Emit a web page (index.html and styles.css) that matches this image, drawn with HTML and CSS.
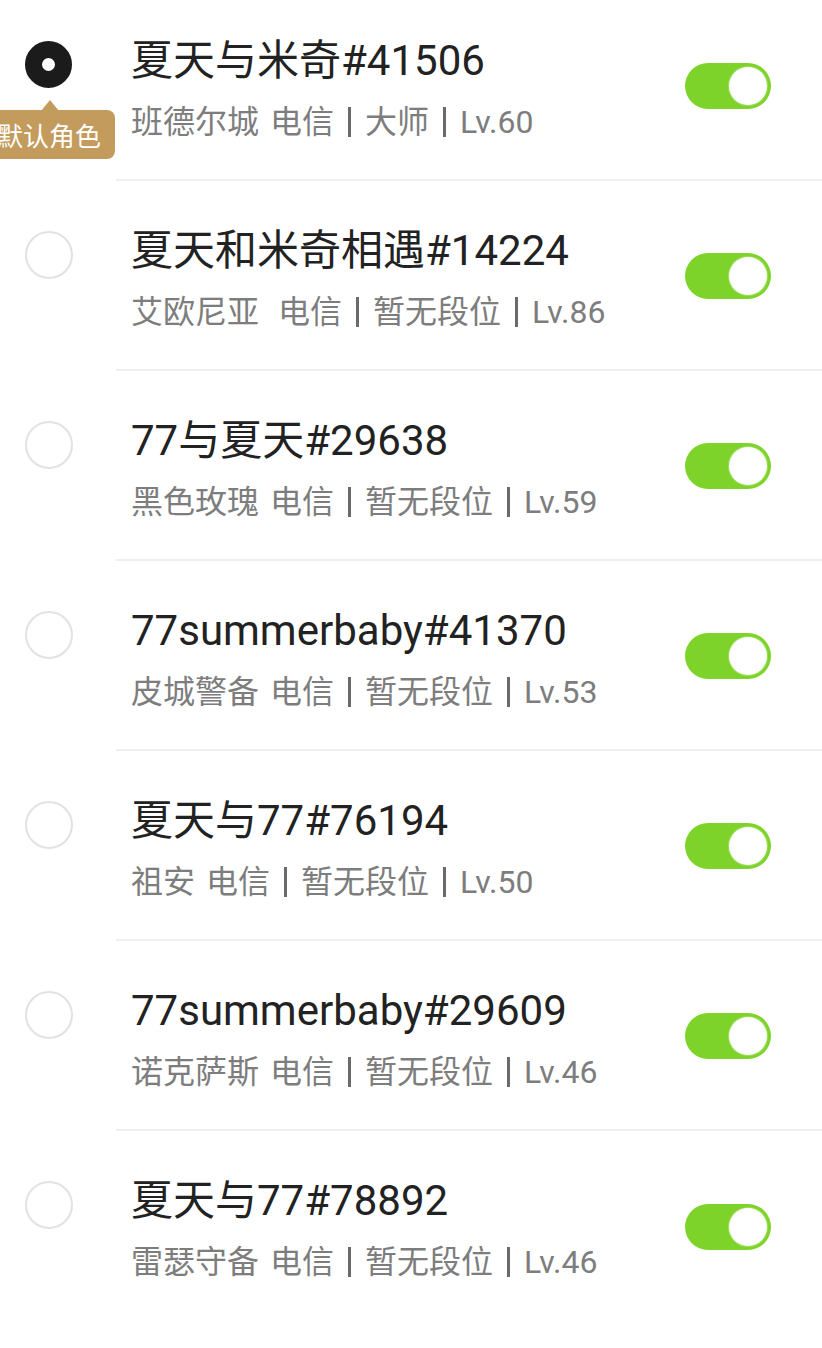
FILE: index.html
```html
<!DOCTYPE html>
<html lang="zh">
<head>
<meta charset="utf-8">
<title>角色列表</title>
<link rel="stylesheet" href="styles.css">
</head>
<body>
<div class="list">
  <div class="row first">
    <div class="pick">
      <span class="radio on"></span>
      <span class="badge">默认角色</span>
    </div>
    <div class="main">
      <div class="info">
        <div class="name">夏天与米奇#41506</div>
        <div class="meta"><span class="region">班德尔城</span>电信<i class="bar"></i>大师<i class="bar"></i>Lv.60</div>
      </div>
      <span class="switch"><span class="knob"></span></span>
    </div>
  </div>
  <div class="row">
    <div class="pick"><span class="radio"></span></div>
    <div class="main">
      <div class="info">
        <div class="name">夏天和米奇相遇#14224</div>
        <div class="meta"><span class="region wide">艾欧尼亚</span>电信<i class="bar"></i>暂无段位<i class="bar"></i>Lv.86</div>
      </div>
      <span class="switch"><span class="knob"></span></span>
    </div>
  </div>
  <div class="row">
    <div class="pick"><span class="radio"></span></div>
    <div class="main">
      <div class="info">
        <div class="name">77与夏天#29638</div>
        <div class="meta"><span class="region">黑色玫瑰</span>电信<i class="bar"></i>暂无段位<i class="bar"></i>Lv.59</div>
      </div>
      <span class="switch"><span class="knob"></span></span>
    </div>
  </div>
  <div class="row">
    <div class="pick"><span class="radio"></span></div>
    <div class="main">
      <div class="info">
        <div class="name">77summerbaby#41370</div>
        <div class="meta"><span class="region">皮城警备</span>电信<i class="bar"></i>暂无段位<i class="bar"></i>Lv.53</div>
      </div>
      <span class="switch"><span class="knob"></span></span>
    </div>
  </div>
  <div class="row">
    <div class="pick"><span class="radio"></span></div>
    <div class="main">
      <div class="info">
        <div class="name">夏天与77#76194</div>
        <div class="meta"><span class="region">祖安</span>电信<i class="bar"></i>暂无段位<i class="bar"></i>Lv.50</div>
      </div>
      <span class="switch"><span class="knob"></span></span>
    </div>
  </div>
  <div class="row">
    <div class="pick"><span class="radio"></span></div>
    <div class="main">
      <div class="info">
        <div class="name">77summerbaby#29609</div>
        <div class="meta"><span class="region">诺克萨斯</span>电信<i class="bar"></i>暂无段位<i class="bar"></i>Lv.46</div>
      </div>
      <span class="switch"><span class="knob"></span></span>
    </div>
  </div>
  <div class="row last">
    <div class="pick"><span class="radio"></span></div>
    <div class="main">
      <div class="info">
        <div class="name">夏天与77#78892</div>
        <div class="meta"><span class="region">雷瑟守备</span>电信<i class="bar"></i>暂无段位<i class="bar"></i>Lv.46</div>
      </div>
      <span class="switch"><span class="knob"></span></span>
    </div>
  </div>
</div>
</body>
</html>
```

FILE: styles.css
```css
html, body {
  margin: 0;
  padding: 0;
  background: #ffffff;
}
body {
  width: 822px;
  height: 1348px;
  overflow: hidden;
  font-family: Roboto, "Noto Sans CJK SC", "Noto Sans", sans-serif;
}
.list {
  margin-top: -9px;
  display: flex;
  flex-direction: column;
}
.row {
  display: flex;
  height: 190px;
}
.pick {
  position: relative;
  width: 116px;
  flex: none;
}
.radio {
  display: block;
  box-sizing: border-box;
  width: 48px;
  height: 48px;
  margin: 50px 0 0 25px;
  border-radius: 50%;
  border: 2px solid #e2e2e2;
  background: #fff;
}
.radio.on {
  border: 17px solid #1b1b1b;
  background: #fff;
  width: 47px;
  height: 47px;
}
.badge {
  position: absolute;
  left: -10px;
  top: 119px;
  width: 125px;
  height: 49px;
  box-sizing: border-box;
  padding-left: 7px;
  border-radius: 8px;
  background: #c29b5d;
  color: #fff;
  font-family: "Noto Sans CJK SC", sans-serif;
  font-size: 26px;
  line-height: 49px;
  white-space: nowrap;
}
.badge::before {
  content: "";
  position: absolute;
  left: 51px;
  top: -10px;
  border-left: 9px solid transparent;
  border-right: 9px solid transparent;
  border-bottom: 11px solid #c29b5d;
}
.main {
  flex: 1;
  display: flex;
  align-items: center;
  justify-content: space-between;
  padding: 0 51px 0 15px;
  border-bottom: 2px solid #efefef;
}
.last .main {
  border-bottom: none;
}
.info {
  align-self: flex-start;
  padding-top: 44px;
}
.name {
  font-size: 42px;
  line-height: 52px;
  color: #222222;
  white-space: nowrap;
}
.meta {
  margin-top: 13px;
  font-size: 32px;
  line-height: 44px;
  color: #7d7d7d;
  white-space: nowrap;
  display: flex;
  align-items: center;
}
.region {
  margin-right: 11px;
}
.region.wide {
  margin-right: 19px;
}
.bar {
  display: inline-block;
  width: 3px;
  height: 30px;
  background: #6a6a6a;
  margin: 0 14px 0 14px;
}
.switch {
  position: relative;
  flex: none;
  width: 86px;
  height: 46px;
  border-radius: 23px;
  background: #7ed32a;
  margin-top: 2px;
}
.knob {
  position: absolute;
  right: 4px;
  top: 4px;
  width: 38px;
  height: 38px;
  border-radius: 50%;
  background: #fff;
  box-shadow: 0 0 0 1px #9ddf5e;
}
```
